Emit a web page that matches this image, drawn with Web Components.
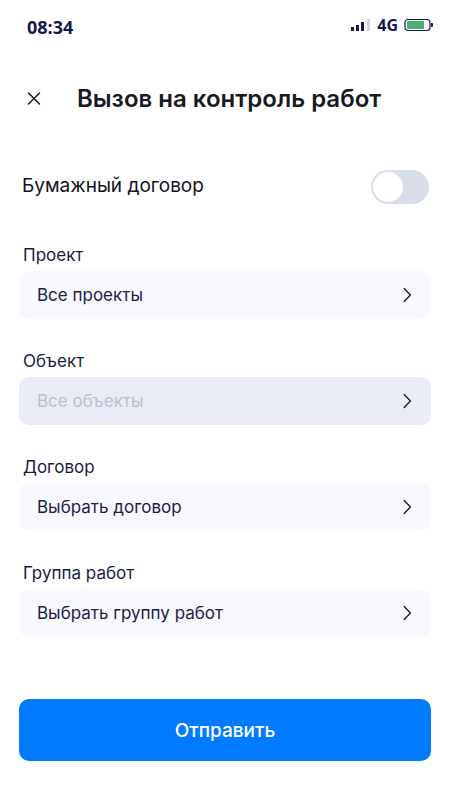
<!DOCTYPE html>
<html lang="ru">
<head>
<meta charset="utf-8">
<meta name="viewport" content="width=device-width, initial-scale=1">
<title>Вызов на контроль работ</title>
<style>
  body { margin: 0; background: #fff; color: #171c46; font-family: Inter, "Noto Sans", sans-serif; }
</style>
</head>
<body>
<call-screen></call-screen>

<script>
const define = (name, html, setup) => {
  const template = document.createElement('template');
  template.innerHTML = html;
  customElements.define(name, class extends HTMLElement {
    constructor() {
      super();
      this.attachShadow({ mode: 'open' }).append(template.content.cloneNode(true));
    }
    connectedCallback() { if (setup) setup(this, this.shadowRoot); }
  });
};

define('status-bar', `
  <style>
    :host { display: flex; align-items: center; justify-content: space-between; height: 24px; padding: 0 16px 0 27px;
      font-family: "Open Sans", "Noto Sans", sans-serif; font-weight: 700; color: #151b48; }
    .time { font-size: 18px; line-height: 24px; }
    .state { display: flex; align-items: center; gap: 6px; font-size: 16px; line-height: 24px; padding-bottom: 4px; }
    svg { display: block; }
  </style>
  <span class="time"><slot name="time"></slot></span>
  <span class="state">
    <svg width="21" height="14" viewBox="0 0 21 14" aria-hidden="true">
      <path fill="#151b48" d="M1 9h3v4H1zM6 7h3v6H6zM11 4h3v9h-3z"/><path fill="#d3d5df" d="M17 1h3v12h-3z"/>
    </svg>
    <slot name="network"></slot>
    <svg width="30" height="14" viewBox="0 0 30 14" aria-hidden="true">
      <rect x="1" y="1.5" width="25" height="11" rx="3" fill="#fff" stroke="#151b48" stroke-width="1.2"/>
      <rect x="3" y="3" width="17" height="8" rx="1" fill="#4bae73"/>
      <path fill="#151b48" d="M27 5h1q1 0 1 1v2q0 1-1 1h-1z"/>
    </svg>
  </span>`);

define('screen-header', `
  <style>
    :host { display: flex; align-items: center; gap: 28px; padding: 0 19px; }
    button { display: grid; place-items: center; width: 30px; height: 30px; padding: 0; border: 0; background: none; cursor: pointer; }
    h1 { margin: 0; font-size: 24px; line-height: 32px; font-weight: 600; color: #171923; }
  </style>
  <button type="button" aria-label="Закрыть">
    <svg width="14" height="14" viewBox="0 0 14 14" fill="none" stroke="#171923" stroke-width="1.5" stroke-linecap="round" aria-hidden="true">
      <path d="M1.5 1l11 11M12.5 1l-11 11"/>
    </svg>
  </button>
  <h1><slot></slot></h1>`);

define('toggle-row', `
  <style>
    :host { display: flex; align-items: center; justify-content: space-between; padding: 0 2px 0 3px; color: #11121d; }
    label { font-size: 19px; line-height: 24px; padding-bottom: 3px; }
    input { appearance: none; display: flex; align-items: center; box-sizing: border-box; width: 58px; height: 34px; margin: 0; padding: 0 2px;
      border-radius: 17px; background: #d7dde9; cursor: pointer; }
    input::before { content: ""; width: 30px; height: 30px; border-radius: 50%; background: #fff; }
    input:checked { justify-content: flex-end; background: #007aff; }
  </style>
  <label for="toggle"><slot></slot></label>
  <input id="toggle" type="checkbox" role="switch">`);

define('select-field', `
  <style>
    :host { display: grid; gap: 4px; }
    label { padding-left: 4px; font-size: 17px; line-height: 24px; }
    .box { display: grid; align-items: center; height: 48px; border-radius: 10px; background: #f8f9fe; }
    :host([disabled]) .box { background: #e9ebf5; }
    select, svg { grid-area: 1 / 1; }
    select { appearance: none; width: 100%; height: 48px; margin: 0; padding: 0 48px 0 18px; border: 0; border-radius: 10px;
      background: none; font: inherit; font-size: 17px; line-height: 24px; color: #1b2148; }
    select:disabled { opacity: 1; color: #b9bfd3; }
    svg { justify-self: end; margin-right: 19px; pointer-events: none; }
  </style>
  <label for="choice"><slot></slot></label>
  <div class="box">
    <select id="choice"><option></option></select>
    <svg width="9" height="16" viewBox="0 0 9 16" fill="none" stroke="#171923" stroke-width="1.3" stroke-linecap="round" stroke-linejoin="round" aria-hidden="true">
      <path d="M1.2 1.5L7.4 8l-6.2 6.5"/>
    </svg>
  </div>`, (host, root) => {
    root.querySelector('option').textContent = host.getAttribute('value');
    root.querySelector('select').disabled = host.hasAttribute('disabled');
  });

define('submit-button', `
  <style>
    :host { display: block; }
    button { width: 100%; height: 62px; padding: 2px 0 0; border: 0; border-radius: 10px; background: #007aff; color: #fff;
      font: inherit; font-size: 19px; line-height: 24px; font-weight: 500; cursor: pointer; }
  </style>
  <button type="submit"><slot></slot></button>`);

define('call-screen', `
  <style>
    :host { display: block; padding: 15px 0 39px; }
    screen-header { margin-top: 44px; }
    form { padding: 0 19px; }
    toggle-row { margin: 55px 0 39px; }
    .fields { display: grid; gap: 30px; }
    submit-button { margin-top: 62px; }
  </style>
  <status-bar><span slot="time">08:34</span><span slot="network">4G</span></status-bar>
  <screen-header>Вызов на контроль работ</screen-header>
  <form>
    <toggle-row>Бумажный договор</toggle-row>
    <div class="fields">
      <select-field value="Все проекты">Проект</select-field>
      <select-field value="Все объекты" disabled>Объект</select-field>
      <select-field value="Выбрать договор">Договор</select-field>
      <select-field value="Выбрать группу работ">Группа работ</select-field>
    </div>
    <submit-button>Отправить</submit-button>
  </form>`);
</script>
</body>
</html>
